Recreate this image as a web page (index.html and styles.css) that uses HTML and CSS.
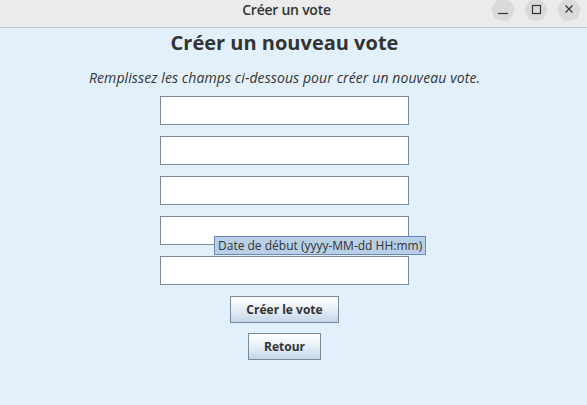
FILE: index.html
```html
<!DOCTYPE html>
<html lang="fr">
<head>
<meta charset="utf-8">
<title>Créer un vote</title>
<link rel="stylesheet" href="styles.css">
</head>
<body>
<div class="window">
  <header class="titlebar">
    <span class="title">Créer un vote</span>
    <div class="controls">
      <span class="ctl">
        <svg width="22" height="22" viewBox="0 0 22 22"><line x1="6" y1="14.5" x2="16" y2="14.5" stroke="#333" stroke-width="1.2"/></svg>
      </span>
      <span class="ctl">
        <svg width="22" height="22" viewBox="0 0 22 22"><rect x="7.5" y="6.5" width="8" height="8" fill="none" stroke="#333" stroke-width="1.2"/></svg>
      </span>
      <span class="ctl">
        <svg width="22" height="22" viewBox="0 0 22 22"><path d="M7.5 6.5 L14.5 13.5 M14.5 6.5 L7.5 13.5" stroke="#333" stroke-width="1.2"/></svg>
      </span>
    </div>
  </header>
  <main class="content">
    <h1 class="heading">Créer un nouveau vote</h1>
    <p class="subtitle">Remplissez les champs ci-dessous pour créer un nouveau vote.</p>
    <div class="fields">
      <input class="field" type="text">
      <input class="field" type="text">
      <input class="field" type="text">
      <input class="field" type="text">
      <input class="field" type="text">
    </div>
    <div class="buttons">
      <button class="btn">Créer le vote</button>
      <button class="btn">Retour</button>
    </div>
    <div class="tooltip">Date de début (yyyy-MM-dd HH:mm)</div>
  </main>
</div>
</body>
</html>
```

FILE: styles.css
```css
* { box-sizing: border-box; }
html, body {
  margin: 0;
  padding: 0;
  width: 587px;
  height: 405px;
  overflow: hidden;
  font-family: "Open Sans", "Noto Sans", sans-serif;
}
.window {
  width: 587px;
  height: 405px;
  display: flex;
  flex-direction: column;
  background: #e2f0fc;
}
.titlebar {
  height: 28px;
  flex: none;
  background: #ebebeb;
  border-bottom: 1px solid #c4c4c4;
  display: flex;
  align-items: flex-start;
  justify-content: center;
  position: relative;
}
.title {
  font-size: 14px;
  font-weight: 600;
  color: #333;
  letter-spacing: -0.25px;
  line-height: 19px;
  margin-left: -14px;
}
.controls {
  position: absolute;
  right: 7px;
  top: -1px;
  display: flex;
  gap: 11px;
}
.ctl {
  width: 22px;
  height: 22px;
  border-radius: 50%;
  background: #dadada;
  display: flex;
}
.content {
  flex: 1;
  position: relative;
  display: flex;
  flex-direction: column;
  align-items: center;
  padding: 1px 18px 0 0;
}
.heading {
  margin: 0;
  font-size: 20px;
  font-weight: 700;
  line-height: 27px;
  color: #333;
}
.subtitle {
  margin: 12px 0 0;
  font-size: 14px;
  font-style: italic;
  line-height: 19px;
  letter-spacing: 0.1px;
  color: #333;
}
.fields {
  margin-top: 9px;
  display: flex;
  flex-direction: column;
  gap: 11px;
}
.field {
  display: block;
  width: 249px;
  height: 29px;
  margin: 0;
  border: 1px solid #7a8897;
  background: #fff;
  padding: 0 4px;
  font: inherit;
}
.buttons {
  margin-top: 11px;
  display: flex;
  flex-direction: column;
  align-items: center;
  gap: 10px;
}
.btn {
  height: 27px;
  margin: 0;
  padding: 0 15px;
  border: 1px solid #7a8a9a;
  background: linear-gradient(#ffffff, #e9f1f8 45%, #c5d6e8);
  font-family: "Open Sans", "Noto Sans", sans-serif;
  font-size: 12px;
  font-weight: 700;
  color: #333;
}
.tooltip {
  position: absolute;
  left: 214px;
  top: 208px;
  height: 19px;
  padding: 0 3px;
  background: #b8cfe6;
  border: 1px solid #6a87c4;
  font-size: 12px;
  line-height: 17px;
  color: #333;
  white-space: nowrap;
}
```
